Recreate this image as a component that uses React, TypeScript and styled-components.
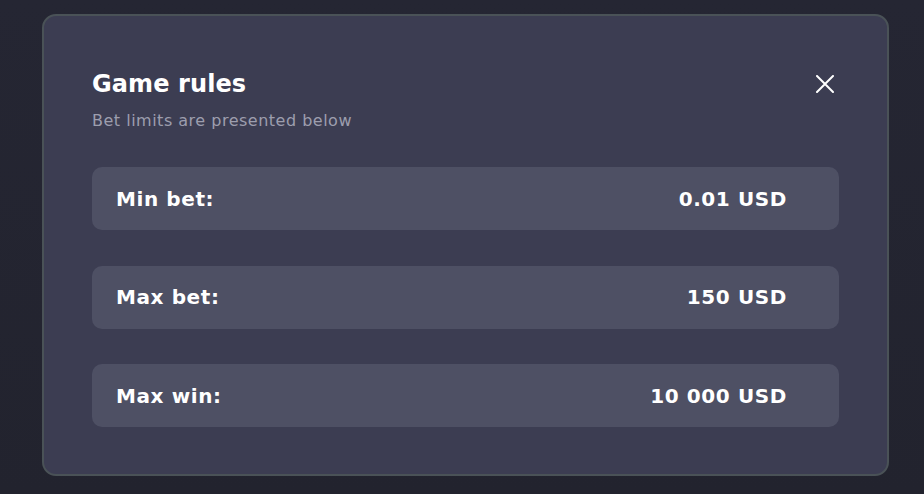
import * as React from 'react';
import styled, { createGlobalStyle } from 'styled-components';

const GlobalStyle = createGlobalStyle`
  html, body {
    margin: 0;
    padding: 0;
    background: #23242f;
  }
  body {
    font-family: 'DejaVu Sans', 'Open Sans', sans-serif;
    color: #ffffff;
  }
`;

const Page = styled.div`
  width: 924px;
  height: 494px;
  box-sizing: border-box;
  padding: 14px 35px 18px 42px;
  background: linear-gradient(180deg, #252633 0%, #22232e 100%);
`;

const Modal = styled.div`
  box-sizing: border-box;
  width: 847px;
  height: 462px;
  background: #3c3d52;
  border: 2px solid #4a5257;
  border-radius: 14px;
  padding: 52px 48px 0 48px;
`;

const Header = styled.div`
  display: flex;
  justify-content: space-between;
  align-items: flex-start;
`;

const Titles = styled.div`
  display: flex;
  flex-direction: column;
  gap: 10px;
`;

const Title = styled.h2`
  margin: 0;
  font-size: 24px;
  line-height: 32px;
  font-weight: 700;
  letter-spacing: 0.1px;
  color: #ffffff;
`;

const Subtitle = styled.p`
  margin: 0;
  font-size: 16px;
  line-height: 22px;
  letter-spacing: 0.5px;
  color: #9d9eae;
`;

const CloseButton = styled.button`
  border: none;
  background: none;
  padding: 0;
  margin: 7px 5px 0 0;
  width: 18px;
  height: 18px;
  cursor: pointer;
  display: flex;
`;

const List = styled.div`
  display: flex;
  flex-direction: column;
  gap: 35.5px;
  margin-top: 35px;
`;

const Row = styled.div`
  display: flex;
  justify-content: space-between;
  align-items: center;
  height: 63px;
  padding: 0 52px 0 24px;
  background: #4e5064;
  border-radius: 10px;
  font-size: 20px;
  font-weight: 700;
  letter-spacing: 0.6px;
`;

const limits = [
  { label: 'Min bet:', value: '0.01 USD' },
  { label: 'Max bet:', value: '150 USD' },
  { label: 'Max win:', value: '10 000 USD' },
];

export default function App() {
  return (
    <>
      <GlobalStyle />
      <Page>
        <Modal>
          <Header>
            <Titles>
              <Title>Game rules</Title>
              <Subtitle>Bet limits are presented below</Subtitle>
            </Titles>
            <CloseButton aria-label="Close">
              <svg width="18" height="18" viewBox="0 0 18 18">
                <path d="M1 1 L17 17 M17 1 L1 17" stroke="#ffffff" strokeWidth="2" strokeLinecap="round" />
              </svg>
            </CloseButton>
          </Header>
          <List>
            {limits.map((l) => (
              <Row key={l.label}>
                <span>{l.label}</span>
                <span>{l.value}</span>
              </Row>
            ))}
          </List>
        </Modal>
      </Page>
    </>
  );
}
